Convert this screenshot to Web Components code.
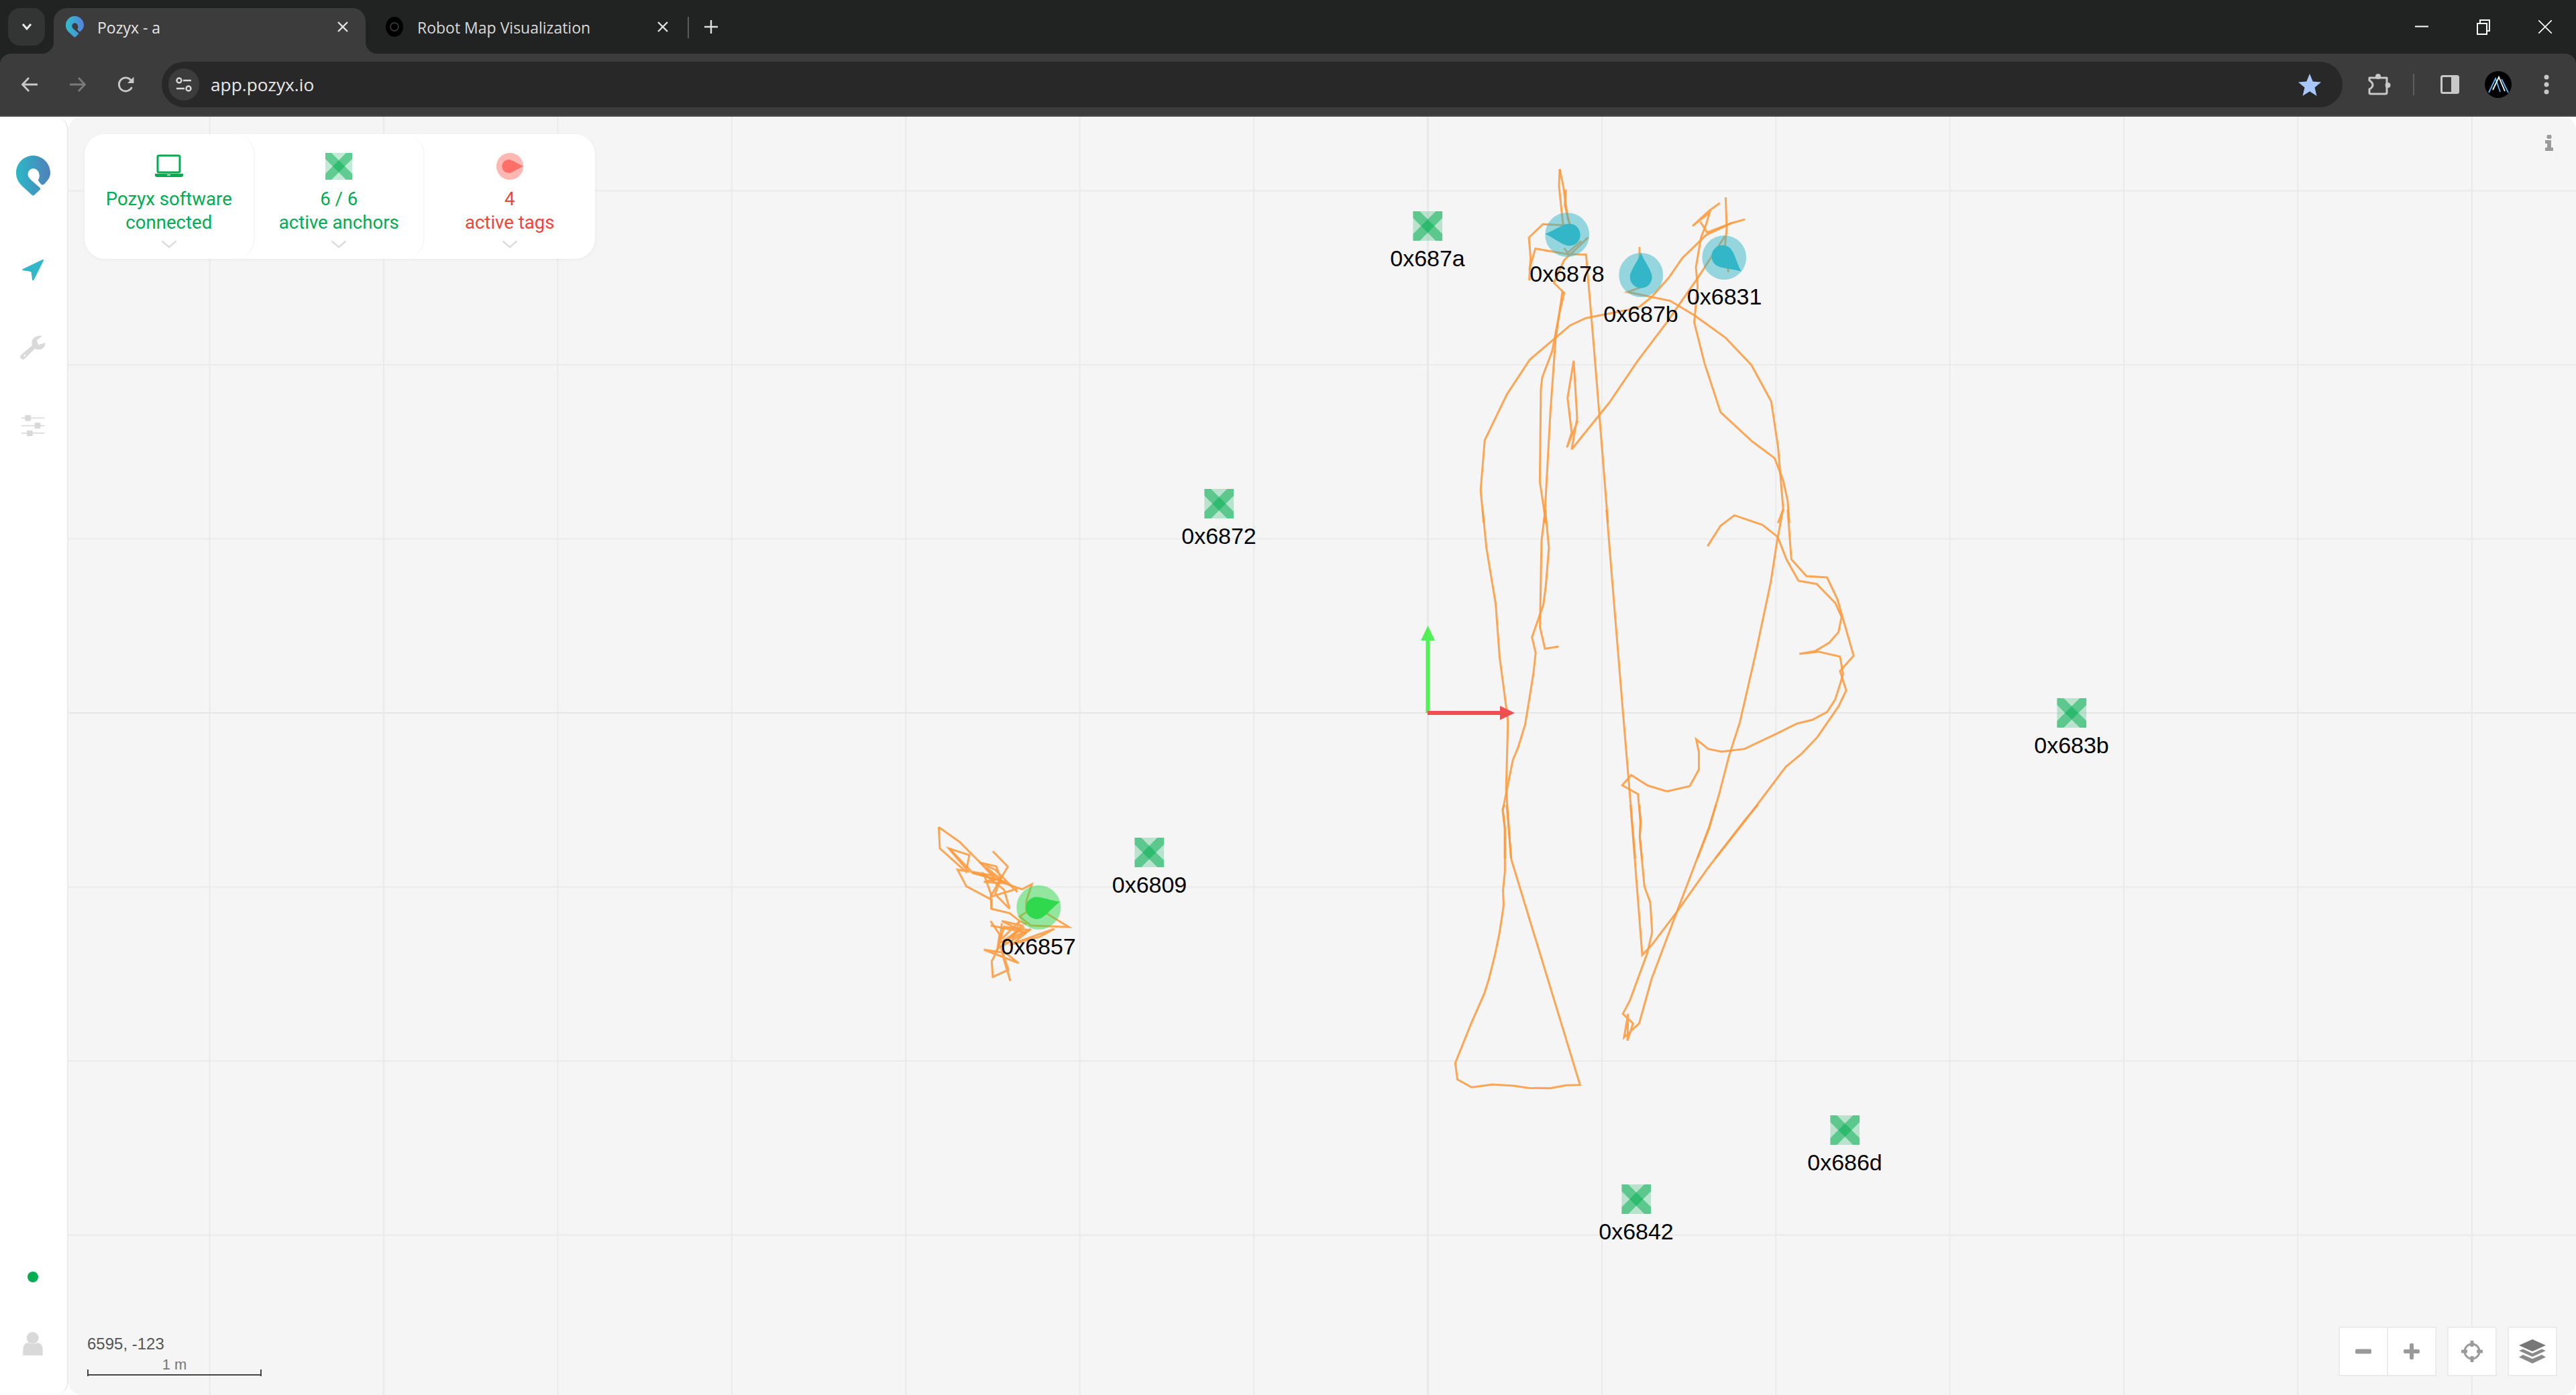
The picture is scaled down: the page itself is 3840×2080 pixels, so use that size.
<!DOCTYPE html>
<html lang="en"><head><meta charset="utf-8"><title>Pozyx - a</title>
<style>
html,body{margin:0;height:100%;background:#212322;overflow:hidden}
body{display:flex;flex-direction:column;font-family:"Liberation Sans",Arial,sans-serif}
</style></head>
<body>
<tab-strip></tab-strip>
<browser-toolbar></browser-toolbar>
<app-shell>
  <side-nav slot="nav"></side-nav>
  <map-view slot="map">
    <map-trace></map-trace>
    <map-anchor label="0x687a" x="2128" y="336.6"></map-anchor>
    <map-anchor label="0x6872" x="1817" y="751"></map-anchor>
    <map-anchor label="0x683b" x="3088" y="1063"></map-anchor>
    <map-anchor label="0x6809" x="1713.5" y="1270.5"></map-anchor>
    <map-anchor label="0x686d" x="2750" y="1685"></map-anchor>
    <map-anchor label="0x6842" x="2439" y="1788"></map-anchor>
    <map-tag label="0x6878" x="2336" y="350" rot="272" color="#33b6c8"></map-tag>
    <map-tag label="0x687b" x="2446" y="410" rot="0" color="#33b6c8"></map-tag>
    <map-tag label="0x6831" x="2570.6" y="384" rot="129" color="#33b6c8"></map-tag>
    <map-tag label="0x6857" x="1548" y="1352.6" rot="75" color="#2fd84c"></map-tag>
    <status-panel>
      <status-cell color="#00ad50"><svg slot="icon" width="44" height="40" viewBox="0 2 44 40"><rect x="5" y="6" width="33" height="25" rx="2" fill="none" stroke="#00ad50" stroke-width="3"/><path d="M1 33h42v2q0 3-3 3H4q-3 0-3-3z" fill="#00ad50"/><rect x="19" y="34" width="5" height="1.5" fill="#fff"/></svg>Pozyx software<br>connected</status-cell>
      <status-cell color="#00ad50"><anchor-glyph slot="icon" size="40"></anchor-glyph>6 / 6<br>active anchors</status-cell>
      <status-cell color="#f44336"><tag-glyph slot="icon" size="40" rot="90" color="#ff6f6a"></tag-glyph>4<br>active tags</status-cell>
    </status-panel>
    <info-mark></info-mark>
    <scale-bar></scale-bar>
    <map-controls></map-controls>
  </map-view>
</app-shell>
<script>
const def=(name,html,init)=>{customElements.define(name,class extends HTMLElement{
  connectedCallback(){ if(this.shadowRoot)return; const r=this.attachShadow({mode:'open'});
    r.innerHTML=typeof html==='function'?html(this):html; if(init)init(this,r);} });};

const LOGO=(id,a,b)=>`<svg viewBox="72 95 153 180" width="100%" height="100%" style="display:block"><defs><linearGradient id="${id}" x1="0" x2="1" y1="0" y2="0"><stop offset="0" stop-color="${a}"/><stop offset="1" stop-color="${b}"/></linearGradient></defs><path fill="url(#${id})" d="M148 95C190 95 225 130 225 172C225 190 215 205 200 220Q190 230 182 222L170 205C178 195 178 180 172 168C162 148 135 148 127 168C120 185 130 195 140 205L178 238Q184 244 178 248L155 270Q148 277 141 270L100 232C82 215 72 195 72 172C72 130 106 95 148 95Z"/></svg>`;

def('browser-tab',t=>`<style>
:host{display:flex;align-items:center;box-sizing:border-box;width:465px;height:68px;padding:0 22px 12px 18px;position:relative;border-radius:20px 20px 0 0;color:#d9d9d9;font:23px "Open Sans",sans-serif}
:host([active]){background:#3c3c3c;color:#e6e6e6}
:host([active])::before,:host([active])::after{content:"";position:absolute;bottom:0;width:18px;height:18px}
:host([active])::before{left:-18px;background:radial-gradient(circle at 0 0,transparent 18px,#3c3c3c 18.5px)}
:host([active])::after{right:-18px;background:radial-gradient(circle at 100% 0,transparent 18px,#3c3c3c 18.5px)}
.ic{width:27px;height:32px;margin-right:20px;flex:none}
.t{flex:1;white-space:nowrap;overflow:hidden;position:relative;top:1px}
svg.x{flex:none}
</style><span class="ic"><slot name="icon"></slot></span><span class="t"><slot></slot></span>
<svg class="x" width="24" height="24" viewBox="0 0 24 24"><path d="M5 5l14 14M19 5L5 19" stroke="#e0e0e0" stroke-width="2.4" fill="none"/></svg>`);

def('tab-strip',`<style>
:host{display:flex;align-items:flex-end;box-sizing:border-box;height:80px;flex:none;background:#212322;padding-left:12px;position:relative}
.more{width:55px;height:56px;margin:0 13px 12px 0;background:#333534;border-radius:18px;display:flex;align-items:center;justify-content:center}
browser-tab+browser-tab{margin-left:12px}
.sep{width:2px;height:32px;background:#5a5a5a;margin:0 0 23px 3px}
.plus{margin:0 0 29px 22px}
.win{margin-left:auto;display:flex;align-self:stretch}
.win span{width:92px;display:flex;align-items:center;justify-content:center}
</style>
<span class="more"><svg width="20" height="14" viewBox="0 0 20 14"><path d="M4 3l6 7 6-7" stroke="#e8e8e8" stroke-width="3" fill="none"/></svg></span>
<browser-tab active><span slot="icon">${LOGO('fav','#2cc0c8','#5b7fe0')}</span>Pozyx - a</browser-tab>
<browser-tab><svg slot="icon" width="27" height="32" viewBox="0 0 27 32"><ellipse cx="13" cy="16" rx="13" ry="15" fill="#000"/><ellipse cx="13" cy="16" rx="6" ry="6" fill="none" stroke="#333" stroke-width="2"/></svg>Robot Map Visualization</browser-tab>
<span class="sep"></span>
<svg class="plus" width="22" height="22" viewBox="0 0 22 22"><path d="M11 1v20M1 11h20" stroke="#e0e0e0" stroke-width="2.4"/></svg>
<span class="win">
<span><svg width="20" height="20" viewBox="0 0 20 20"><path d="M0 9.5h20" stroke="#fff" stroke-width="2"/></svg></span>
<span><svg width="20" height="24" viewBox="0 0 20 24"><path d="M1 7h14v16H1zM5 7V2h14v16h-4" fill="none" stroke="#fff" stroke-width="2"/></svg></span>
<span><svg width="20" height="20" viewBox="0 0 20 20"><path d="M0 0l20 20M20 0L0 20" stroke="#fff" stroke-width="1.6"/></svg></span>
</span>`);

def('browser-toolbar',`<style>
:host{display:flex;align-items:center;box-sizing:border-box;height:94px;flex:none;background:#3c3c3c;border-radius:16px 16px 0 0;border-bottom:2px solid #494949;padding:0 40px 0 8px;position:relative}
.b{width:72px;height:40px;display:flex;align-items:center;justify-content:center;flex:none}
.omni{flex:1;margin-left:17px;height:68px;background:#282828;border-radius:34px;display:flex;align-items:center;padding:0 32px 0 10px;color:#e8e8e8;font:26.3px "Open Sans",sans-serif}
.site{width:46px;height:48px;border-radius:24px;background:#3c3c3c;display:flex;align-items:center;justify-content:center;margin-right:17px}
.url{flex:1;position:relative;top:0}
svg{display:block;flex:none}
.pz{margin-left:38px}.sp{width:2px;height:32px;background:#5e5e5e;margin-left:33px;flex:none}
.pn{margin-left:39px}.av{margin-left:38px}.dt{margin-left:48px}
</style>
<span class="b"><svg width="26" height="24" viewBox="0 0 26 24"><path d="M25 12H3M12 2L2.500 12 12 22" fill="none" stroke="#c8c8c8" stroke-width="2.800"/></svg></span>
<span class="b"><svg width="26" height="24" viewBox="0 0 26 24"><path d="M1 12h22M14 2l9.500 10L14 22" fill="none" stroke="#7a7a7a" stroke-width="2.800"/></svg></span>
<span class="b"><svg width="26" height="26" viewBox="0 0 26 26"><path d="M21.500 17A10 10 0 1 1 20 6.500L23 9.500" fill="none" stroke="#c8c8c8" stroke-width="2.800"/><path d="M24.500 1.500V11H15z" fill="#c8c8c8"/></svg></span>
<div class="omni"><span class="site"><svg width="26" height="26" viewBox="0 0 26 26" fill="none" stroke="#d8d8d8" stroke-width="2.400"><circle cx="6" cy="7" r="3.500"/><path d="M12 7h12M2 19h12"/><circle cx="20" cy="19" r="3.500"/></svg></span><span class="url">app.pozyx.io</span>
<svg width="34" height="33" viewBox="0 0 34 33"><path d="M17 0l4.700 11.600 12.300.9-9.500 8 3 12.500L17 26.300 6.500 33l3-12.500-9.500-8 12.300-.9z" fill="#a8c7fa"/></svg></div>
<svg class="pz" width="34" height="32" viewBox="0 0 34 32"><path d="M2 6H28V28a2 2 0 0 1-2 2H4a2 2 0 0 1-2-2V23Q7 20 7 17Q7 13 2 10Z" fill="none" stroke="#c8c8c8" stroke-width="3" stroke-linejoin="round"/><circle cx="15" cy="4" r="4" fill="#c8c8c8"/><circle cx="29.500" cy="17" r="4" fill="#c8c8c8"/></svg>
<span class="sp"></span>
<svg class="pn" width="28" height="28" viewBox="0 0 28 28"><rect x="1.500" y="1.500" width="25" height="25" rx="2" fill="none" stroke="#c8c8c8" stroke-width="3"/><rect x="16" y="1" width="11" height="26" fill="#c8c8c8"/></svg>
<svg class="av" width="40" height="40" viewBox="0 0 40 40"><circle cx="20" cy="20" r="20" fill="#000"/><path d="M6 32L16 11l7 20" fill="none" stroke="#5ab7f0" stroke-width="1.800"/><path d="M12 28l9-19 9 21" fill="none" stroke="#fff" stroke-width="1.800"/><path d="M25 12l10 20" fill="none" stroke="#5ab7f0" stroke-width="1.800"/></svg>
<svg class="dt" width="8" height="30" viewBox="0 0 8 30"><g fill="#c8c8c8"><circle cx="4" cy="4" r="3.500"/><circle cx="4" cy="15" r="3.500"/><circle cx="4" cy="26" r="3.500"/></g></svg>`);

def('app-shell',`<style>
:host{display:flex;flex:1;min-height:0;background:#fff}
::slotted(side-nav){flex:none}
::slotted(map-view){flex:1;min-width:0}
</style><slot name="nav"></slot><slot name="map"></slot>`);

def('side-nav',`<style>
:host{display:flex;flex-direction:column;align-items:center;box-sizing:border-box;width:102px;padding:58px 2px 59px 0;border-right:2px solid #ebebeb;border-radius:0 20px 20px 0;background:#fff}
svg{display:block}
.logo{width:51px;height:60px;margin-bottom:95px}
.nav{margin-bottom:81px}.wr{margin-bottom:82px}
.bot{margin-top:auto;display:flex;flex-direction:column;align-items:center;gap:74px}
.dot{width:16px;height:16px;border-radius:50%;background:#00ad50}
</style>
<div class="logo">${LOGO('lg','#2bb9c9','#5080b8')}</div>
<svg class="nav" width="32" height="32" viewBox="102 562 96 96"><path d="M192 563Q200 560 197 568L155 652Q150 660 147 652L143 620Q142 616 137 615L106 611Q99 608 106 604Z" fill="#33b6c8"/></svg>
<svg class="wr" width="38" height="37" viewBox="94 901 114 111"><path d="M97 990L148 945C140 920 160 900 192 903L168 924L176 944L207 934C206 960 182 972 160 961L112 1008Q105 1013 98 1005Q92 997 97 990Z" fill="#d9d9d9"/><circle cx="115" cy="991" r="4" fill="#fff"/></svg>
<svg width="36" height="32" viewBox="97 1258 106 96"><g stroke="#dedede" stroke-width="6"><path d="M98 1271H202M98 1305H202M98 1338H202"/></g><g fill="#d9d9d9"><rect x="115" y="1258" width="26" height="26" rx="4"/><rect x="158" y="1292" width="26" height="26" rx="4"/><rect x="123" y="1326" width="26" height="26" rx="4"/></g></svg>
<div class="bot"><span class="dot"></span>
<svg width="30" height="35" viewBox="106 378 90 105"><circle cx="150" cy="405" r="27" fill="#d9d9d9"/><path d="M107 483V460Q107 428 130 426Q150 440 172 426Q195 428 195 460V483H107Z" fill="#d9d9d9"/></svg></div>`);

def('map-view',`<style>
:host{display:block;position:relative;overflow:hidden;border-radius:20px;background-color:#f5f5f5}
.g{position:absolute;inset:0;background-image:linear-gradient(to right,#eaeaea 2px,transparent 2px),linear-gradient(#eaeaea 2px,transparent 2px);background-size:259.4px 259.5px;background-position:209.7px 109.5px}
</style><div class="g"></div><slot></slot>`);

def('map-trace',`<style>
:host{position:absolute;inset:0;display:block}
svg{display:block;position:absolute;left:0;top:0}
polyline{fill:none;stroke:#ff9a3e;stroke-opacity:.88;stroke-width:3;vector-effect:non-scaling-stroke;stroke-linejoin:miter}
</style>
<svg width="3738" height="1906" viewBox="102 174 3738 1906">
<path d="M2128.500 174V2080" stroke="#e6e6e6" stroke-width="2" fill="none"/><path d="M102 1063H3840" stroke="#e6e6e6" stroke-width="2" fill="none"/>
<g transform="translate(2000 220) scale(.5102 .3571)">
<polyline points="637,90 648,165 660,290 668,330"/>
<polyline points="637,90 635,160 645,300 650,340"/>
<polyline points="655,175 652,240 668,330 665,400"/>
<polyline points="655,325 588,320 547,376 552,460 548,555"/>
<polyline points="548,510 566,422 660,445 714,447 735,800 752,1100 778,1568"/>
<polyline points="720,375 680,430 650,470 620,565 650,607 635,700 615,850 586,960 582,1010 579,1395 597,1568"/>
<polyline points="645,600 625,800 610,1100 592,1568"/>
<polyline points="700,390 660,440 650,420"/>
<polyline points="415,1568 406,1430 418,1222 483,1030 550,885 668,742 714,712 830,680 870,665 905,625 955,545 995,462 1065,365 1140,315 1178,300"/>
<polyline points="870,415 872,585 835,603 960,640 1030,700 1122,795 1197,908 1255,1060 1275,1250 1290,1510 1275,1568"/>
<polyline points="1120,370 1040,545 950,730 865,890 782,1065 672,1260 688,1130 678,890 660,1045 672,1190 658,1252 690,1140"/>
<polyline points="1122,208 1125,340 1120,410 1130,520"/>
<polyline points="1105,232 1075,262 1025,328 1075,272 1065,320 1050,375 1035,500 1040,580 1030,730 1060,900 1107,1105 1200,1228 1265,1297 1290,1390 1303,1475 1308,1568"/>
<polyline points="1048,310 1068,355 1140,315"/>
</g>
<g transform="translate(2100 760) scale(.4592 .3333)">
<polyline points="240,0 252,170 282,420 295,660 318,900 322,950 316,1250 332,1560"/>
<polyline points="443,0 455,170 445,340 437,425 400,570 412,640 405,730 378,960 356,1060 338,1120 305,1345 312,1430 312,1560"/>
<polyline points="443,0 431,140 426,525 442,622 487,612"/>
<polyline points="642,0 660,310 695,900 735,1560"/>
<polyline points="970,163 1012,72 1057,25 1148,68 1198,122 1226,222 1265,318 1324,332 1385,418 1405,480 1395,548 1365,595 1320,632 1268,645 1330,635 1400,657 1410,735 1398,790 1384,850 1358,905 1310,940 1260,957 1190,1005 1090,1070 1015,1082 972,1070 933,1027 942,1087 942,1162 912,1237 838,1260 776,1234 722,1187 693,1233 744,1272 752,1395 750,1465 757,1560"/>
<polyline points="1230,0 1242,222 1291,297 1358,303 1392,402 1444,653 1400,722 1420,808 1396,878 1326,1018 1275,1092 1224,1150 1090,1395 995,1560"/>
<polyline points="1215,0 1197,130 1175,325 1125,650 1075,950 1040,1100 1010,1260 975,1425 937,1560"/>
</g>
<g transform="translate(2100 1200) scale(.4592 .3333)">
<polyline points="318,0 333,245 556,1253 510,1255 458,1268 388,1267 342,1257 272,1251 204,1264 158,1229 151,1155 205,970 245,845 260,780 280,670 295,570 308,450 306,380 312,300 312,100 305,20 310,0"/>
<polyline points="720,0 758,672 790,625 870,480 970,285 1090,70 1133,0"/>
<polyline points="748,0 753,75 750,145 765,365 784,437 790,570 775,660 718,875 695,935 728,978 710,1055 712,935 699,1040 748,978 788,780 870,480 975,100 997,0"/>
</g>
<g transform="translate(1350 1200) scale(.3333)">
<polyline points="148,100 240,165 330,255 400,330 440,350 520,378 565,355 540,430 540,480 510,500 560,540 730,547 630,485"/>
<polyline points="148,100 153,195 270,300 285,225 193,195 280,298 232,290 272,365 385,425 383,465 465,485 510,520 540,535"/>
<polyline points="390,208 457,277 420,340 380,410 385,465"/>
<polyline points="195,195 300,305 450,345 500,390 400,290 330,258 405,275 425,330 400,400 465,465 440,380 350,310 385,410 500,375"/>
<polyline points="300,305 430,340 380,300 440,350 350,345 420,330 360,280 410,320 300,300"/>
<polyline points="380,520 420,580 410,650 385,700 390,770 460,738 430,650 505,708 350,648 430,660 468,788 440,680"/>
<polyline points="380,540 530,570 430,520 520,540 420,640 560,555 480,620 665,555 600,590 470,625 510,520 430,600"/>
<polyline points="430,530 420,620 530,545 460,600 550,560 440,545 415,640 400,660"/>
</g>
<path d="M2128.500 1063V950" stroke="#52ef55" stroke-width="6" fill="none"/><path d="M2128.500 933L2139 955H2118Z" fill="#52ef55"/>
<path d="M2128 1063H2240" stroke="#ef4e52" stroke-width="6" fill="none"/><path d="M2258 1063L2236 1052.500V1073.500Z" fill="#ef4e52"/>
</svg>`);

def('anchor-glyph',t=>{const s=t.getAttribute('size')||44;return `<style>:host{display:block;width:${s}px;height:${s}px}svg{display:block}</style>
<svg width="${s}" height="${s}" viewBox="0 0 44 44"><rect width="44" height="44" fill="#00ad50" fill-opacity=".24"/><path d="M0 0H10L44 34V44H34L0 10Z" fill="#00ad50" fill-opacity=".5"/><path d="M44 0V10L10 44H0V34L34 0Z" fill="#00ad50" fill-opacity=".5"/></svg>`});

def('tag-glyph',t=>{const s=t.getAttribute('size')||66,c=t.getAttribute('color'),r=t.getAttribute('rot')||0;return `<style>:host{display:block;width:${s}px;height:${s}px}svg{display:block}</style>
<svg width="${s}" height="${s}" viewBox="-33 -33 66 66"><circle r="33" fill="${c}" fill-opacity=".5"/><path transform="rotate(${r})" fill="${c}" d="M0 -33C4 -22 16.500 -6 16.500 3A16.500 16.500 0 0 1 -16.500 3C-16.500 -6 -4 -22 0 -33Z"/></svg>`});

const pin=t=>`left:${t.getAttribute('x')-102}px;top:${t.getAttribute('y')-174}px`;
const pinCss=`:host{position:absolute;display:block;width:0;height:0}
.w{position:absolute;transform:translateX(-50%);display:flex;flex-direction:column;align-items:center;color:#000;font:34px/40px "Liberation Sans",Arial,sans-serif;white-space:nowrap}`;
def('map-anchor',t=>`<style>${pinCss}.l{margin-top:6px}</style><div class="w" style="top:-22px"><anchor-glyph size="44"></anchor-glyph><span class="l">${t.getAttribute('label')}</span></div>`,(t)=>{t.style.cssText=pin(t)});
def('map-tag',t=>`<style>${pinCss}.l{margin-top:5px}</style><div class="w" style="top:-33px"><tag-glyph size="66" rot="${t.getAttribute('rot')}" color="${t.getAttribute('color')}"></tag-glyph><span class="l">${t.getAttribute('label')}</span></div>`,(t)=>{t.style.cssText=pin(t)});

def('status-panel',`<style>
:host{position:absolute;left:24px;top:26px;display:flex;background:#fff;border-radius:30px;box-shadow:0 1px 4px rgba(0,0,0,.06)}
</style><slot></slot>`);
def('status-cell',t=>`<style>
:host{display:flex;flex-direction:column;align-items:center;box-sizing:border-box;width:253.500px;height:186px;padding-top:28px;border-right:2px solid #f7f7f7;border-radius:30px;color:${t.getAttribute('color')};font:27.6px/35px Roboto,sans-serif;text-align:center;white-space:nowrap}
:host(:last-child){border-right:0}
.i{height:40px;margin-bottom:11px;display:flex;align-items:center;justify-content:center}
svg{display:block}.c{margin-top:9px}
</style><span class="i"><slot name="icon"></slot></span><span><slot></slot></span>
<svg class="c" width="24" height="12" viewBox="0 0 24 12"><path d="M1.500 1.500L12 10.500 22.500 1.500" fill="none" stroke="#dcdcdc" stroke-width="2.400"/></svg>`);

def('info-mark',`<style>:host{position:absolute;right:33px;top:27px;display:block}svg{display:block}</style>
<svg width="14" height="24" viewBox="0 0 14 24" fill="#9a9a9a"><rect x="3.500" y="0" width="7" height="6" rx="2"/><path d="M1 8h9v11h3v5H1v-5h3v-6H1z"/></svg>`);

def('scale-bar',`<style>
:host{position:absolute;left:28px;bottom:28px;display:block;width:260px;font-family:"Liberation Sans",Arial,sans-serif}
.c{font-size:24px;line-height:28px;color:#555;white-space:nowrap}
.m{font-size:22px;line-height:26px;color:#777;text-align:center;margin-top:4px}
.r{height:4px;position:relative}
.r::before{content:"";position:absolute;left:0;right:0;top:1px;height:2px;background:#444}
.t{position:absolute;top:-6px;width:2px;height:10px;background:#444}
</style><div class="c">6595, -123</div><div class="m">1 m</div><div class="r"><span class="t" style="left:0"></span><span class="t" style="right:0"></span></div>`);

def('map-controls',`<style>
:host{position:absolute;right:28px;bottom:28px;display:flex;gap:16px}
.g{display:flex}
.b{box-sizing:border-box;width:74px;height:74px;background:#fff;border:2px solid #ebebeb;display:flex;align-items:center;justify-content:center}
.g .b+.b{margin-left:-2px}
svg{display:block}
</style>
<div class="g"><span class="b"><svg width="24" height="8" viewBox="0 0 24 8"><rect width="24" height="7" y=".5" rx="2" fill="#9a9a9a"/></svg></span><span class="b"><svg width="24" height="24" viewBox="0 0 24 24"><path d="M9 2q0-2 2-2h2q2 0 2 2v7h7q2 0 2 2v2q0 2-2 2h-7v7q0 2-2 2h-2q-2 0-2-2v-7H2q-2 0-2-2v-2q0-2 2-2h7z" fill="#9a9a9a"/></svg></span></div>
<span class="b"><svg width="32" height="32" viewBox="0 0 32 32"><circle cx="16" cy="16" r="11" fill="none" stroke="#9a9a9a" stroke-width="3"/><g fill="#9a9a9a"><rect x="13.500" y="0" width="5" height="9" rx="1"/><rect x="13.500" y="23" width="5" height="9" rx="1"/><rect x="0" y="13.500" width="9" height="5" rx="1"/><rect x="23" y="13.500" width="9" height="5" rx="1"/></g></svg></span>
<span class="b"><svg width="40" height="36" viewBox="0 0 40 36"><path d="M20 0L40 9 20 18 0 9Z" fill="#777"/><path d="M6 14.500L20 21 34 14.500 40 17 20 26 0 17Z" fill="#8a8a8a"/><path d="M6 23L20 29 34 23 40 26.500 20 36 0 26.500Z" fill="#8a8a8a"/></svg></span>`);
</script>
</body></html>
